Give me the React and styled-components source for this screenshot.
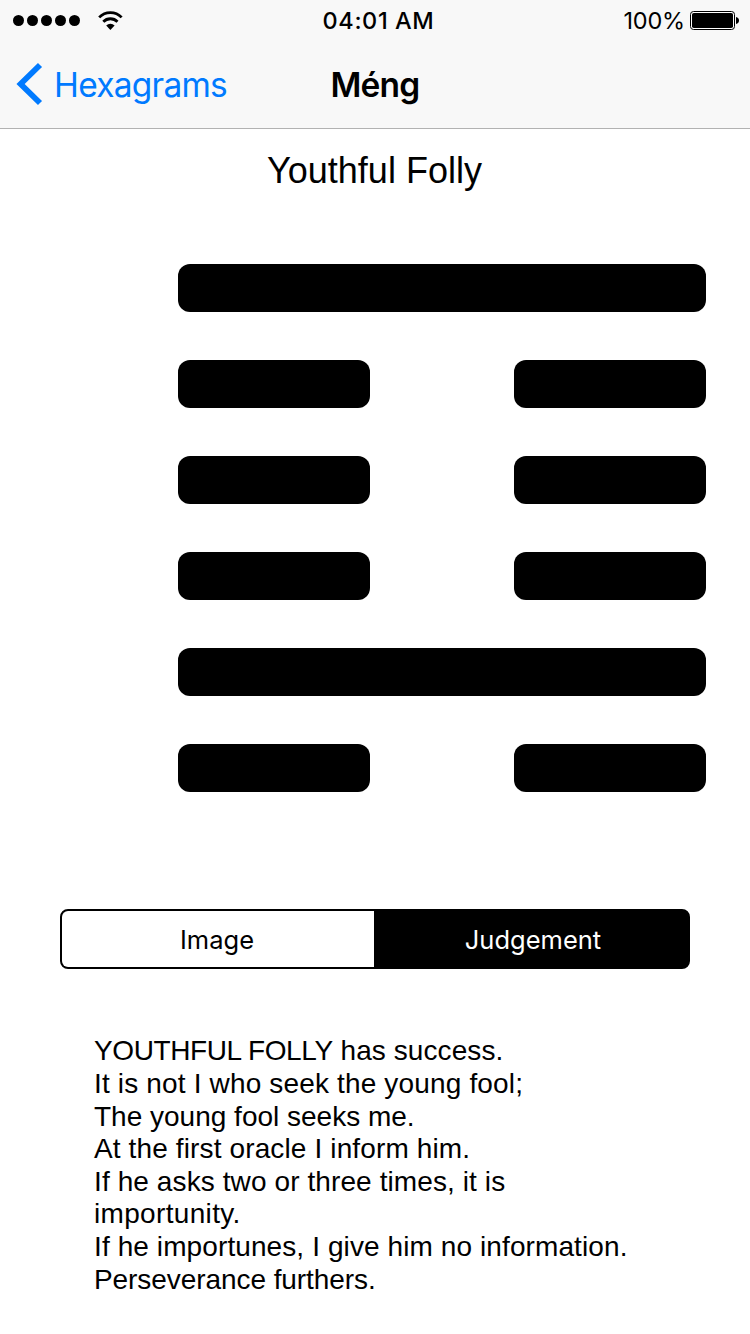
import React from 'react';
import styled, { createGlobalStyle } from 'styled-components';

const system = "Inter, 'Liberation Sans', sans-serif";
const helvetica = "'Liberation Sans', Arial, sans-serif";

const GlobalStyle = createGlobalStyle`
  *, *::before, *::after { box-sizing: border-box; }
  body { margin: 0; background: #fff; color: #000; }
`;

const Screen = styled.div`
  width: 750px;
  height: 1334px;
  display: flex;
  flex-direction: column;
  background: #fff;
  overflow: hidden;
`;

const Header = styled.header`
  height: 129px;
  flex: none;
  background: #f8f8f8;
  border-bottom: 1px solid #b2b2b2;
`;

const StatusBar = styled.div`
  height: 40px;
  display: grid;
  grid-template-columns: 250px 1fr 250px;
  align-items: center;
  font: 400 23.5px/40px ${system};
`;

const Signal = styled.div`
  display: flex;
  align-items: center;
  gap: 3px;
  padding: 0 0 0 13px;
`;

const Dot = styled.i`
  width: 11px;
  height: 11px;
  border-radius: 50%;
  background: #000;
`;

const WifiIcon = styled.svg`
  width: 26px;
  height: 20px;
  margin-left: 14px;
`;

const Time = styled.div`
  text-align: center;
  font-weight: 500;
  font-size: 23.5px;
  letter-spacing: 0.6px;
  padding: 1px 0 0 7px;
`;

const Power = styled.div`
  display: flex;
  justify-content: flex-end;
  align-items: center;
  gap: 5px;
  padding: 0 10px 0 0;
  letter-spacing: -0.2px;
`;

const BatteryIcon = styled.svg`
  width: 50px;
  height: 20px;
`;

const NavBar = styled.nav`
  height: 88px;
  display: grid;
  grid-template-columns: 250px 1fr 250px;
  align-items: center;
`;

const Back = styled.a`
  display: flex;
  align-items: center;
  gap: 11px;
  padding-left: 16px;
  color: #007aff;
  font: 400 33.5px/44px ${system};
  letter-spacing: -0.75px;
`;

const BackLabel = styled.span`
  padding-top: 1px;
`;

const Chevron = styled.svg`
  width: 27px;
  height: 44px;
`;

const NavTitle = styled.h1`
  margin: 0;
  padding-top: 1px;
  text-align: center;
  font: 600 33.5px/44px ${system};
  letter-spacing: -0.8px;
`;

const Subtitle = styled.h2`
  margin: 21px 1px 0 0;
  text-align: center;
  font: 400 36px/42px ${helvetica};
`;

const Hexagram = styled.section`
  margin: 72px 44px 0 178px;
  display: flex;
  flex-direction: column;
  gap: 48px;
`;

const HexLine = styled.div`
  height: 48px;
  display: flex;
  justify-content: space-between;
`;

const Bar = styled.div`
  width: ${({ $solid }) => ($solid ? '100%' : '192px')};
  border-radius: 12px;
  background: #000;
`;

const Segmented = styled.div`
  margin: 117px 60px 0;
  height: 60px;
  flex: none;
  display: flex;
  border: 2px solid #000;
  border-radius: 8px;
  overflow: hidden;
  background: #000;
`;

const Segment = styled.button`
  width: ${({ $width }) => $width}px;
  padding: ${({ $active }) => ($active ? '2px 0 0 4px' : '2px 2px 0 0')};
  border: 0;
  background: ${({ $active }) => ($active ? '#000' : '#fff')};
  color: ${({ $active }) => ($active ? '#fff' : '#000')};
  font: 400 25.5px/32px ${system};
`;

const Verse = styled.div`
  margin: 66.4px 60px 0 94px;
  font: 400 28px/32.6px ${helvetica};
`;

const VerseLine = styled.p`
  margin: 0;
  white-space: nowrap;
  letter-spacing: ${({ $tracking }) => $tracking}px;
`;

const Capitals = styled.span`
  letter-spacing: -0.4px;
`;

const lines = [true, false, false, false, true, false];

const verse = [
  ['It is not I who seek the young fool;', 0.16],
  ['The young fool seeks me.', 0],
  ['At the first oracle I inform him.', 0.13],
  ['If he asks two or three times, it is', 0.1],
  ['importunity.', 0.33],
  ['If he importunes, I give him no information.', 0.1],
  ['Perseverance furthers.', -0.07],
];

export default function App() {
  return (
    <Screen>
      <GlobalStyle />
      <Header>
        <StatusBar>
          <Signal>
            {[0, 1, 2, 3, 4].map((i) => <Dot key={i} />)}
            <WifiIcon viewBox="0 0 26 20" fill="none" stroke="#000" strokeWidth="2.8">
              <path d="M2.2 6.4a15.6 15.6 0 0 1 22.4 0" />
              <path d="M6.3 10.7a10 10 0 0 1 14.2 0" />
              <path d="M9.2 14.5a6 6 0 0 1 8.4 0L13.4 18.9z" fill="#000" stroke="none" />
            </WifiIcon>
          </Signal>
          <Time>04:01 AM</Time>
          <Power>
            <span>100%</span>
            <BatteryIcon viewBox="0 0 50 20">
              <rect x="0.5" y="0.5" width="44" height="18" rx="3" fill="#fff" stroke="#000" />
              <rect x="2" y="2" width="41" height="15" rx="1.8" />
              <path d="M46 6c4 0.8 4 6.2 0 7z" />
            </BatteryIcon>
          </Power>
        </StatusBar>
        <NavBar>
          <Back>
            <Chevron viewBox="0 0 27 44" fill="none" stroke="#007aff" strokeWidth="5.8">
              <path d="M24 3 4.6 22 24 41" />
            </Chevron>
            <BackLabel>Hexagrams</BackLabel>
          </Back>
          <NavTitle>Méng</NavTitle>
        </NavBar>
      </Header>
      <Subtitle>Youthful Folly</Subtitle>
      <Hexagram>
        {lines.map((solid, i) => (
          <HexLine key={i}>
            <Bar $solid={solid} />
            {!solid && <Bar />}
          </HexLine>
        ))}
      </Hexagram>
      <Segmented>
        <Segment $width={312}>Image</Segment>
        <Segment $width={314} $active>Judgement</Segment>
      </Segmented>
      <Verse>
        <VerseLine $tracking={0.08}><Capitals>YOUTHFUL FOLLY</Capitals> has success.</VerseLine>
        {verse.map(([text, tracking]) => (
          <VerseLine key={text} $tracking={tracking}>{text}</VerseLine>
        ))}
      </Verse>
    </Screen>
  );
}
